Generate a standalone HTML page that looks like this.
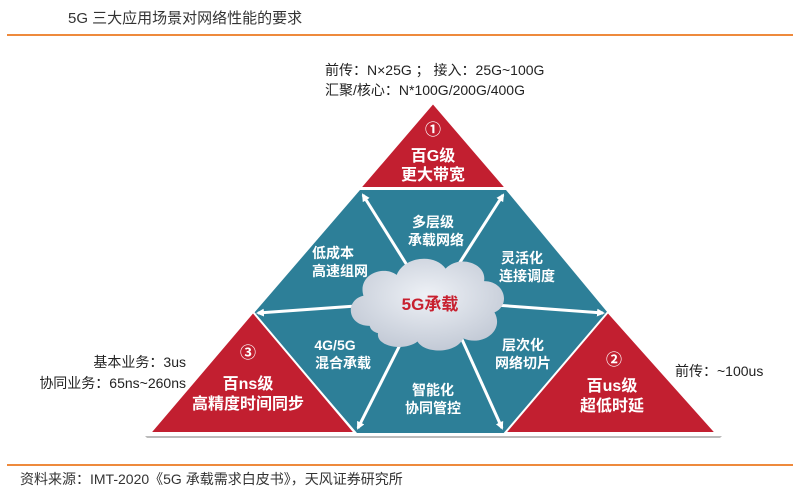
<!DOCTYPE html>
<html><head><meta charset="utf-8"><style>
html,body{margin:0;padding:0;background:#fff;width:800px;height:497px;overflow:hidden}
body{font-family:"Liberation Sans","Noto Sans CJK SC",sans-serif}
svg{position:absolute;left:0;top:0}
</style></head><body>
<svg width="800" height="497" viewBox="0 0 800 497" xmlns="http://www.w3.org/2000/svg" font-family="Liberation Sans, Noto Sans CJK SC, sans-serif">
<defs>
<marker id="ah" markerWidth="8" markerHeight="8" refX="6" refY="4" orient="auto" markerUnits="userSpaceOnUse"><path d="M0,0 L8,4 L0,8 Z" fill="#fff"/></marker>
<radialGradient id="cg" cx="0.5" cy="0.4" r="0.6"><stop offset="0" stop-color="#eef1f6"/><stop offset="1" stop-color="#c3cad6"/></radialGradient>
</defs>
<text x="68" y="23" font-size="15" fill="#333">5G 三大应用场景对网络性能的要求</text>
<rect x="7" y="34" width="786" height="2" fill="#ee8a3c"/>
<text x="325" y="75" font-size="14" fill="#222">前传：N×25G ； 接入：25G~100G</text>
<text x="325" y="95" font-size="14" fill="#222">汇聚/核心：N*100G/200G/400G</text>
<text x="186" y="367" font-size="14" fill="#222" text-anchor="end">基本业务：3us</text>
<text x="186" y="388" font-size="14" fill="#222" text-anchor="end">协同业务：65ns~260ns</text>
<text x="675" y="376" font-size="14" fill="#222">前传：~100us</text>
<polygon points="145,436 722,436 720,438 147,438" fill="#bbb"/>
<polygon points="360,190 506,190 608,313 505,433 357,433 254,313" fill="#2d7f98"/>
<polygon points="433,103 506,188 360,188" fill="#c21f30" stroke="#fff" stroke-width="2"/>
<polygon points="253,312 355,433 150,433" fill="#c21f30" stroke="#fff" stroke-width="2"/>
<polygon points="608,312 716,433 505,433" fill="#c21f30" stroke="#fff" stroke-width="2"/>
<g stroke="#fff" stroke-width="3" marker-end="url(#ah)">
<line x1="410" y1="270" x2="363" y2="195"/>
<line x1="455" y1="270" x2="503" y2="195"/>
<line x1="495" y1="305" x2="603" y2="313"/>
<line x1="460" y1="335" x2="502" y2="428"/>
<line x1="405" y1="335" x2="358" y2="428"/>
<line x1="370" y1="305" x2="258" y2="313"/>
</g>
<path transform="translate(430,303) scale(1.04) translate(-430,-303)" d="M372,325 C350,325 348,300 366,296 C360,276 385,266 398,276 C405,258 435,255 445,270 C458,256 485,265 482,282 C502,282 508,305 492,312 C502,330 480,345 462,337 C455,352 425,352 418,340 C405,350 378,345 380,332 C376,331 373,329 372,325 Z" fill="url(#cg)"/>
<text x="430" y="310" font-size="17" font-weight="bold" fill="#c8202f" text-anchor="middle">5G承载</text>
<g fill="#fff" font-weight="bold" text-anchor="middle">
<text x="433" y="135" font-size="16">①</text>
<text x="433" y="161" font-size="16">百G级</text>
<text x="433" y="180" font-size="16">更大带宽</text>
<text x="248" y="358" font-size="16">③</text>
<text x="248" y="389" font-size="16">百ns级</text>
<text x="248" y="409" font-size="16">高精度时间同步</text>
<text x="614" y="365" font-size="16">②</text>
<text x="612" y="391" font-size="16">百us级</text>
<text x="612" y="411" font-size="16">超低时延</text>
<g font-size="14">
<text x="433" y="227">多层级</text>
<text x="436" y="245">承载网络</text>
<text x="333" y="258">低成本</text>
<text x="340" y="276">高速组网</text>
<text x="522" y="263">灵活化</text>
<text x="527" y="281">连接调度</text>
<text x="335" y="350">4G/5G</text>
<text x="343" y="368">混合承载</text>
<text x="523" y="350">层次化</text>
<text x="523" y="368">网络切片</text>
<text x="433" y="395">智能化</text>
<text x="433" y="413">协同管控</text>
</g></g>
<rect x="7" y="464" width="786" height="2" fill="#ee8a3c"/>
<text x="20" y="484" font-size="14" fill="#333">资料来源：IMT-2020《5G 承载需求白皮书》，天风证券研究所</text>
</svg>
</body></html>
